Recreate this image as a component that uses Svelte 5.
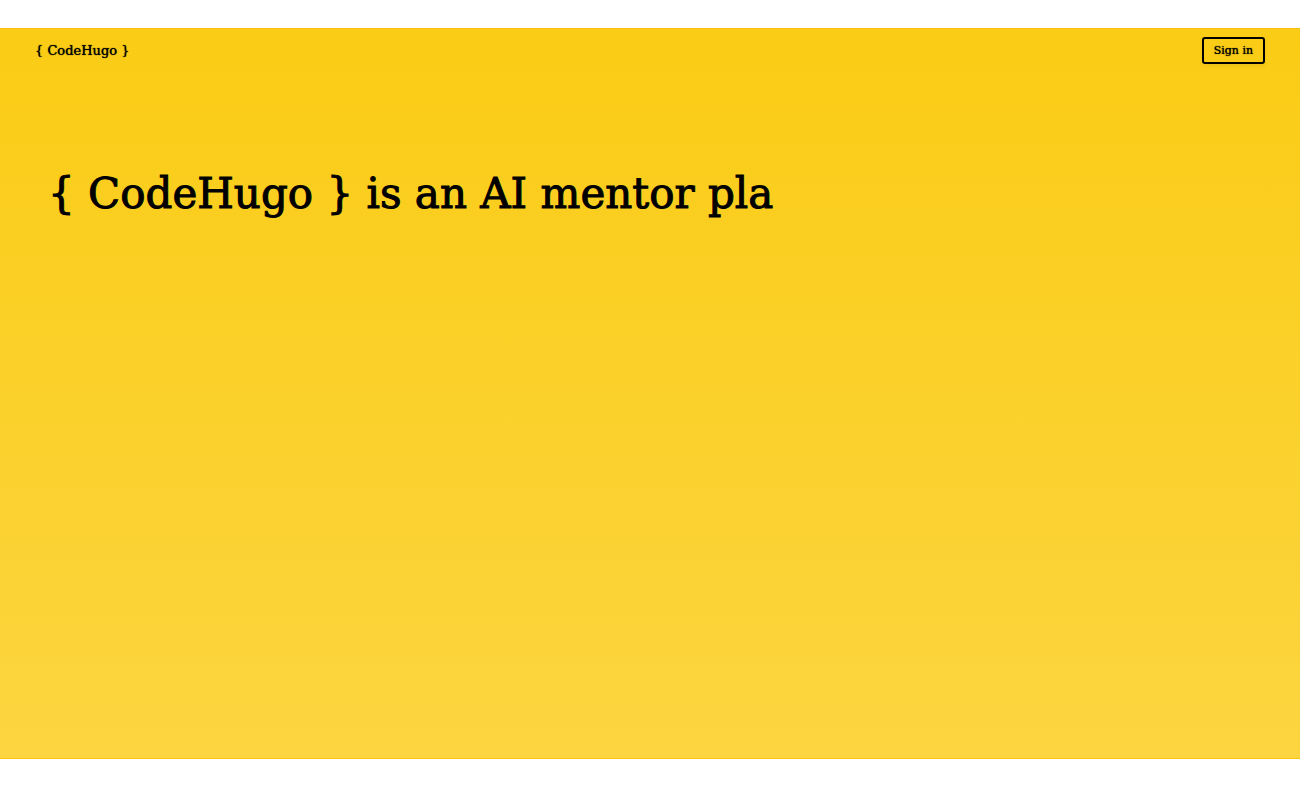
<script>
  const fullText = '{ CodeHugo } is an AI mentor platform';
  let typed = 32;

  $: visibleText = fullText.slice(0, typed);
</script>

<div class="page">
  <header>
    <a class="brand" href="/">{'{ CodeHugo }'}</a>
    <button type="button">Sign in</button>
  </header>
  <main>
    <h1>{visibleText}</h1>
  </main>
</div>

<style>
  :global(body) {
    background: #fff;
  }

  .page {
    box-sizing: border-box;
    min-height: calc(100vh - 57px);
    margin: 28px 0 29px;
    border-top: 1px solid #fbbf14;
    border-bottom: 1px solid #fbc30c;
    background: linear-gradient(#facc15, #fcd540);
    color: #000;
    font-family: "DejaVu Serif", serif;
  }

  header {
    display: flex;
    align-items: center;
    justify-content: space-between;
    padding: 8px 35px;
  }

  .brand {
    color: inherit;
    font-size: 13px;
    font-weight: 500;
    text-decoration: none;
    text-shadow: 0 0 1px #000;
  }

  button {
    height: 27px;
    padding: 0 10px;
    border: 2px solid #000;
    border-radius: 3px;
    background: transparent;
    color: inherit;
    font-family: inherit;
    font-size: 11px;
    text-shadow: 0 0 1px #000;
    cursor: pointer;
    box-shadow: 0 2px 4px rgba(0, 0, 0, 0.06);
  }

  main {
    padding: 92px 48px 0;
  }

  h1 {
    margin: 0;
    font-size: 42px;
    font-weight: 500;
    line-height: 60px;
    -webkit-text-stroke: 1px #000;
  }
</style>
